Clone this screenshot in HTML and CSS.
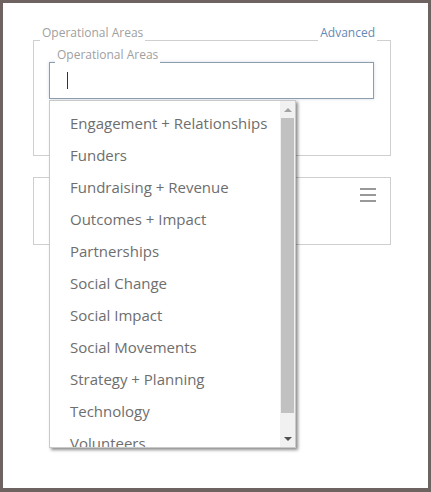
FILE: index.html
```html
<!DOCTYPE html>
<html lang="en">
<head>
  <meta charset="UTF-8" />
  <meta name="viewport" content="width=device-width, initial-scale=1" />
  <title>Operational Areas</title>
  <link rel="stylesheet" href="styles.css">
</head>
<body>
  <div class="frame">
    <div class="area">
      <span class="area-label">Operational Areas</span>
      <a class="advanced" href="#">Advanced</a>

      <div class="field">
        <span class="field-label">Operational Areas</span>
        <span class="caret"></span>
      </div>

      <div class="dropdown">
        <ul class="options">
          <li>Engagement + Relationships</li>
          <li>Funders</li>
          <li>Fundraising + Revenue</li>
          <li>Outcomes + Impact</li>
          <li>Partnerships</li>
          <li>Social Change</li>
          <li>Social Impact</li>
          <li>Social Movements</li>
          <li>Strategy + Planning</li>
          <li>Technology</li>
          <li>Volunteers</li>
        </ul>
        <div class="scrollbar">
          <div class="sb-btn up"><span class="arrow-up"></span></div>
          <div class="sb-thumb"></div>
          <div class="sb-track"></div>
          <div class="sb-btn down"><span class="arrow-down"></span></div>
        </div>
      </div>
    </div>

    <div class="panel">
      <div class="menu-icon">
        <span></span><span></span><span></span>
      </div>
    </div>
  </div>
</body>
</html>
```

FILE: styles.css
```css
* { box-sizing: border-box; }
html, body {
  margin: 0;
  padding: 0;
}
body {
  font-family: "Open Sans", Arial, sans-serif;
  background-color: #6e6360;
}
.frame {
  width: 431px;
  height: 492px;
  border: 3px solid #6e6360;
  border-bottom-width: 4px;
  background: #fff;
  padding: 37px 0 0 30px;
}

/* top group box */
.area {
  position: relative;
  width: 358px;
  height: 116px;
  border: 1px solid #cfcfcf;
  padding: 21px 0 0 15px;
}
.area-label, .field-label {
  position: absolute;
  top: -16px;
  padding: 0 2px;
  background: #fff;
  font-size: 12px;
  line-height: 16px;
  color: #a0a0a0;
}
.area-label { left: 6px; }
.advanced {
  position: absolute;
  top: -16px;
  right: 13px;
  padding: 0 2px;
  background: #fff;
  font-size: 12px;
  line-height: 16px;
  color: #6489b6;
  text-decoration: none;
}

.field {
  position: relative;
  width: 325px;
  height: 37px;
  border: 1px solid #8d9dac;
  box-shadow: 0 0 3px rgba(120, 150, 190, 0.35);
  display: flex;
  align-items: center;
  padding-left: 17px;
}
.field-label { left: 5px; }
.caret {
  width: 1px;
  height: 17px;
  background: #333;
}

/* open list */
.dropdown {
  position: absolute;
  left: 15px;
  top: 59px;
  width: 247px;
  height: 348px;
  background: #fff;
  border: 1px solid #c9c9c9;
  box-shadow: 2px 2px 3px rgba(0, 0, 0, 0.45);
  display: flex;
  z-index: 2;
}
.options {
  flex: 1;
  list-style: none;
  margin: 0;
  padding: 6px 0 0 0;
  overflow: hidden;
}
.options li {
  height: 32px;
  line-height: 32px;
  padding-left: 20px;
  font-size: 15px;
  color: #6e6e6e;
  white-space: nowrap;
}
.scrollbar {
  width: 15px;
  display: flex;
  flex-direction: column;
  background: #f1f1f1;
}
.sb-btn {
  height: 17px;
  display: flex;
  align-items: center;
  justify-content: center;
}
.sb-thumb {
  height: 295px;
  margin: 0 1px;
  background: #c1c1c1;
}
.sb-track { flex: 1; }
.arrow-up, .arrow-down {
  width: 0;
  height: 0;
  border-left: 4px solid transparent;
  border-right: 4px solid transparent;
}
.arrow-up { border-bottom: 4px solid #a3a3a3; }
.arrow-down { border-top: 4px solid #505050; }

/* lower box */
.panel {
  width: 358px;
  height: 68px;
  margin-top: 21px;
  border: 1px solid #cfcfcf;
  display: flex;
  justify-content: flex-end;
  align-items: flex-start;
  padding: 10px 14px 0 0;
}
.menu-icon {
  display: flex;
  flex-direction: column;
  gap: 4px;
  width: 16px;
}
.menu-icon span {
  height: 2px;
  background: #999;
}
```
